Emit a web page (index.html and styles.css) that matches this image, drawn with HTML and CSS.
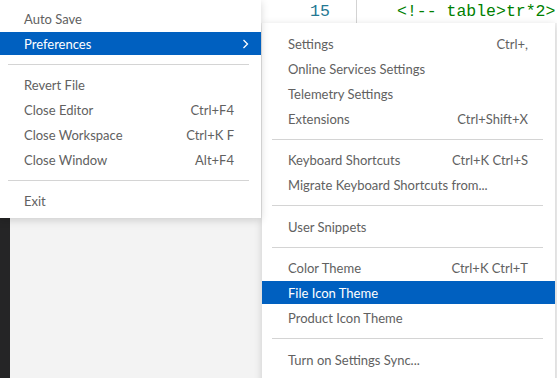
FILE: index.html
```html
<!DOCTYPE html>
<html lang="en">
<head>
    <meta charset="UTF-8">
    <title>File menu - Preferences</title>
    <link rel="stylesheet" href="styles.css">
</head>
<body>
    <div class="workbench">
        <div class="activity-strip"></div>

        <!-- editor line peeking out above the submenu -->
        <div class="editor">
            <span class="line-number">15</span>
            <span class="indent-guide"></span>
            <span class="code">&lt;!-- table&gt;tr*2&gt;</span>
        </div>

        <ul class="menu main-menu">
            <li class="item"><span class="label">Auto Save</span></li>
            <li class="item selected">
                <span class="label">Preferences</span>
                <svg class="chevron" width="7" height="10" viewBox="0 0 7 10"><polyline points="1.5,1 5.5,5 1.5,9" fill="none" stroke="currentColor" stroke-width="1.3"/></svg>
            </li>
            <li class="separator"></li>
            <li class="item"><span class="label">Revert File</span></li>
            <li class="item"><span class="label">Close Editor</span><span class="keys">Ctrl+F4</span></li>
            <li class="item"><span class="label">Close Workspace</span><span class="keys">Ctrl+K F</span></li>
            <li class="item"><span class="label">Close Window</span><span class="keys">Alt+F4</span></li>
            <li class="separator"></li>
            <li class="item"><span class="label">Exit</span></li>
        </ul>

        <ul class="menu sub-menu">
            <li class="item"><span class="label">Settings</span><span class="keys">Ctrl+,</span></li>
            <li class="item"><span class="label">Online Services Settings</span></li>
            <li class="item"><span class="label">Telemetry Settings</span></li>
            <li class="item"><span class="label">Extensions</span><span class="keys">Ctrl+Shift+X</span></li>
            <li class="separator"></li>
            <li class="item"><span class="label">Keyboard Shortcuts</span><span class="keys">Ctrl+K Ctrl+S</span></li>
            <li class="item"><span class="label">Migrate Keyboard Shortcuts from...</span></li>
            <li class="separator wide"></li>
            <li class="item"><span class="label">User Snippets</span></li>
            <li class="separator"></li>
            <li class="item"><span class="label">Color Theme</span><span class="keys">Ctrl+K Ctrl+T</span></li>
            <li class="item selected"><span class="label">File Icon Theme</span></li>
            <li class="item"><span class="label">Product Icon Theme</span></li>
            <li class="separator wide"></li>
            <li class="item"><span class="label">Turn on Settings Sync...</span></li>
        </ul>
    </div>
</body>
</html>
```

FILE: styles.css
```css
body { margin: 0; padding: 0; background-color: #f3f3f3; font-family: Lato, "Noto Sans", sans-serif; overflow: hidden; }
.workbench { position: relative; width: 557px; height: 378px; overflow: hidden; }

.activity-strip { position: absolute; left: 0; top: 0; width: 10px; height: 100%; background-color: #252526; }

/* editor line above the submenu */
.editor {
    position: absolute;
    left: 261px;
    top: 0;
    right: 0;
    height: 23px;
    background-color: #ffffff;
    display: flex;
    align-items: center;
    font-family: "Liberation Mono", monospace;
    font-size: 16.5px;
}
.line-number { color: #237893; margin-left: 49px; width: 46px; }
.indent-guide { width: 1px; height: 100%; background-color: #d3d3d3; }
.code { color: #008000; margin-left: 40px; white-space: pre; }

/* menus */
.menu {
    position: absolute;
    list-style: none;
    margin: 0;
    background-color: #ffffff;
    display: flex;
    flex-direction: column;
    font-size: 13px;
    color: #616161;
}
.main-menu { left: -2px; top: 0; width: 263px; padding: 6px 0 5px; box-shadow: 0 2px 8px rgba(0, 0, 0, 0.16); z-index: 2; }
.sub-menu { left: 262px; top: 23px; width: 293px; height: 400px; padding: 8px 0 0; box-shadow: 0 2px 8px rgba(0, 0, 0, 0.16); z-index: 1; }

.item {
    display: flex;
    align-items: center;
    justify-content: space-between;
    height: 23px;
    margin: 1px 0;
    padding: 0 27px 0 26px;
    white-space: nowrap;
}
.item.selected { background-color: #0060c0; color: #ffffff; }
.chevron { margin-right: -15px; }

.separator { height: 1px; margin: 8px 12px 7px 10px; background-color: #d4d4d4; }
.separator.wide { margin-bottom: 8px; }
```
